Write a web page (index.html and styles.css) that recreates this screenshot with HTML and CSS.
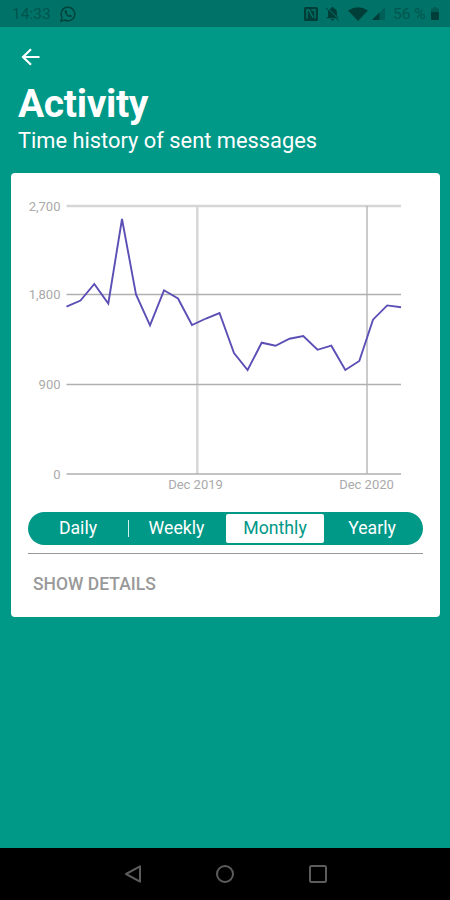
FILE: index.html
```html
<!DOCTYPE html>
<html lang="en">
<head>
    <meta charset="UTF-8">
    <meta name="viewport" content="width=device-width, initial-scale=1.0">
    <title>Activity</title>
    <link rel="stylesheet" href="styles.css">
</head>
<body>
    <div class="status-bar">
        <span class="clock">14:33</span>
        <svg class="whatsapp" width="16" height="16" viewBox="0 0 16 16">
            <path d="M1 15l1-3.7A6.8 6.8 0 1 1 4.700 14z" fill="none" stroke="currentColor" stroke-width="1.5"/>
            <path d="M5.300 4.200c-1.400 1.200-.3 3.600 1.400 5.200s3.800 2.300 5 1l.2-1-2-1-.9 1C7.800 8.900 7 8.100 6.600 7.100l.7-.8-.8-2.100z" fill="currentColor"/>
        </svg>
        <div class="status-icons">
            <svg class="nfc" width="14" height="14" viewBox="0 0 14 14">
                <rect width="14" height="14" rx="1.500" fill="currentColor"/>
                <path d="M3 11.500V3h2l4 7.500M7.500 3H11v8.500" fill="none" stroke="#00796c" stroke-width="1.300"/>
            </svg>
            <svg class="bell" width="15" height="15" viewBox="0 0 15 15">
                <path d="M3 11V6.500A4.500 4.500 0 0 1 6.500 2.200V1h2v1.200A4.500 4.500 0 0 1 12 6.500V10l1.500 1.500v.8h-12v-.8zM6 13h3a1.500 1.500 0 0 1-3 0z" fill="currentColor"/>
                <path d="M2 1.500l12 12" stroke="#00796c" stroke-width="1"/>
                <path d="M1 2l12.500 12.500" stroke="currentColor" stroke-width="1"/>
            </svg>
            <svg class="wifi" width="20" height="14" viewBox="0 0 20 14">
                <path d="M0 3.500Q10-3 20 3.500L10 14z" fill="currentColor"/>
            </svg>
            <svg class="signal" width="13" height="13" viewBox="0 0 13 13">
                <path d="M0 13L13 0v13z" fill="currentColor" opacity=".35"/>
                <path d="M0 13l7.500-7.500V13z" fill="currentColor"/>
            </svg>
            <span class="percent">56 %</span>
            <svg class="battery" width="8" height="13" viewBox="0 0 8 13">
                <path d="M2.500 0h3v1.500H8V6H0V1.500h2.500z" fill="currentColor" opacity=".4"/>
                <path d="M0 5h8v7a1 1 0 0 1-1 1H1a1 1 0 0 1-1-1z" fill="currentColor"/>
            </svg>
        </div>
    </div>

    <main class="screen">
        <a class="back" href="#" aria-label="Back">
            <svg width="20" height="20" viewBox="0 0 20 20">
                <path d="M18.500 10H2M10 2.200L2 10l8 7.800" fill="none" stroke="#fff" stroke-width="2.200"/>
            </svg>
        </a>
        <h1>Activity</h1>
        <p class="subtitle">Time history of sent messages</p>

        <div class="card">
            <svg class="chart" width="395" height="306" viewBox="28 190 395 306">
                <g class="grid">
                    <path class="wide" d="M66.500 206H401M197.300 206V474"/>
                    <path d="M66.500 294.500H401M66.500 384.500H401M66.500 474H401M367 206V474"/>
                </g>
                <g class="y-labels">
                    <text x="60.500" y="210.500">2,700</text>
                    <text x="60.500" y="299">1,800</text>
                    <text x="60.500" y="389">900</text>
                    <text x="60.500" y="478.500">0</text>
                </g>
                <g class="x-labels">
                    <text x="195.500" y="489.300">Dec 2019</text>
                    <text x="366.500" y="489.300">Dec 2020</text>
                </g>
                <polyline class="line" points="66.500,306.700 80.500,300.500 94.300,284 108.300,303.500 122,219 136,294.500 150,325.300 164,290.300 178,298.500 192,325 206,318.500 219.500,313 234,353 247.600,370 261.700,342.700 275.500,345.800 289.500,338.700 303.300,336 317.500,349.800 331.300,345.700 345.300,370 359.300,361 373,319.700 387.200,305.400 401,307.200"/>
            </svg>

            <div class="tabs">
                <div class="tab">Daily</div>
                <div class="tab divided">Weekly</div>
                <div class="tab active">Monthly</div>
                <div class="tab">Yearly</div>
            </div>

            <div class="details">SHOW DETAILS</div>
        </div>
    </main>

    <div class="nav-bar">
        <svg width="18" height="20" viewBox="0 0 18 20">
            <path d="M16 2.300v15.400L2 10z"/>
        </svg>
        <svg width="20" height="20" viewBox="0 0 20 20">
            <circle cx="10" cy="10" r="8"/>
        </svg>
        <svg width="20" height="20" viewBox="0 0 20 20">
            <rect x="2" y="2" width="16" height="16" rx="1.500"/>
        </svg>
    </div>
</body>
</html>
```
FILE: styles.css
```css
* {
    box-sizing: border-box;
}
body {
    margin: 0;
    height: 900px;
    display: flex;
    flex-direction: column;
    background-color: #009887;
    font-family: Roboto, "Liberation Sans", sans-serif;
    color: #fff;
    overflow: hidden;
}

/* Status bar */
.status-bar {
    height: 27px;
    display: flex;
    align-items: center;
    padding: 0 11px 0 12px;
    background-color: #007268;
    color: #00433d;
    font-size: 15.5px;
}
.clock {
    width: 39px;
    color: #00554d;
}
.whatsapp {
    margin-left: 9px;
}
.status-icons {
    margin-left: auto;
    display: flex;
    align-items: center;
    color: #003f39;
}
.bell {
    margin-left: 7px;
}
.wifi {
    margin-left: 8px;
}
.signal {
    margin-left: 4px;
}
.percent {
    width: 34px;
    margin-left: 8px;
    white-space: nowrap;
    color: #00564e;
}
.battery {
    margin-left: 4px;
}

/* Header */
.screen {
    flex: 1;
    padding: 20px 10px 0 11px;
}
.back {
    display: block;
    width: 20px;
    height: 20px;
    margin-left: 10px;
}
h1 {
    margin: 15px 0 0 7px;
    font-size: 39px;
    line-height: 44px;
    font-weight: bold;
    letter-spacing: -0.35px;
}
.subtitle {
    margin: 2px 0 0 7px;
    font-size: 21.85px;
    line-height: 26px;
}

/* Card */
.card {
    height: 444px;
    margin-top: 19px;
    padding: 17px 17px 0;
    background-color: #fff;
    border-radius: 4px;
}
.chart {
    display: block;
}
.grid path {
    fill: none;
    stroke: #b0b0b0;
    stroke-width: 1.3;
}
.grid .wide {
    stroke: #d6d6d6;
    stroke-width: 2.4;
}
.chart text {
    font-size: 13px;
    fill: #aaa;
}
.y-labels {
    text-anchor: end;
}
.x-labels {
    text-anchor: middle;
}
.line {
    fill: none;
    stroke: #5b4fb5;
    stroke-width: 1.9;
}

/* Period switch */
.tabs {
    display: grid;
    grid-template-columns: 100px 98px 98px 99px;
    grid-template-rows: 29px;
    height: 33px;
    margin-top: 16px;
    padding: 2px 0;
    background-color: #009887;
    border-radius: 17px;
}
.tab {
    display: flex;
    align-items: center;
    justify-content: center;
    font-size: 17.7px;
    line-height: 17px;
}
.divided {
    margin: 6px 0;
    padding-right: 2px;
    border-left: 1px solid #d5efec;
}
.active {
    background-color: #fff;
    color: #009887;
    border-radius: 2px;
}
.tab:last-child {
    padding-right: 3px;
}
.details {
    margin-top: 8px;
    padding: 19px 5px 0;
    border-top: 1.5px solid #999;
    font-size: 17.5px;
    font-weight: 500;
    line-height: 22px;
    color: #999;
}

/* Android navigation */
.nav-bar {
    height: 52px;
    display: flex;
    justify-content: center;
    align-items: center;
    gap: 73px;
    padding-left: 2px;
    background-color: #000;
}
.nav-bar svg {
    fill: none;
    stroke: #5c5c5c;
    stroke-width: 2;
    stroke-linejoin: round;
}
```
